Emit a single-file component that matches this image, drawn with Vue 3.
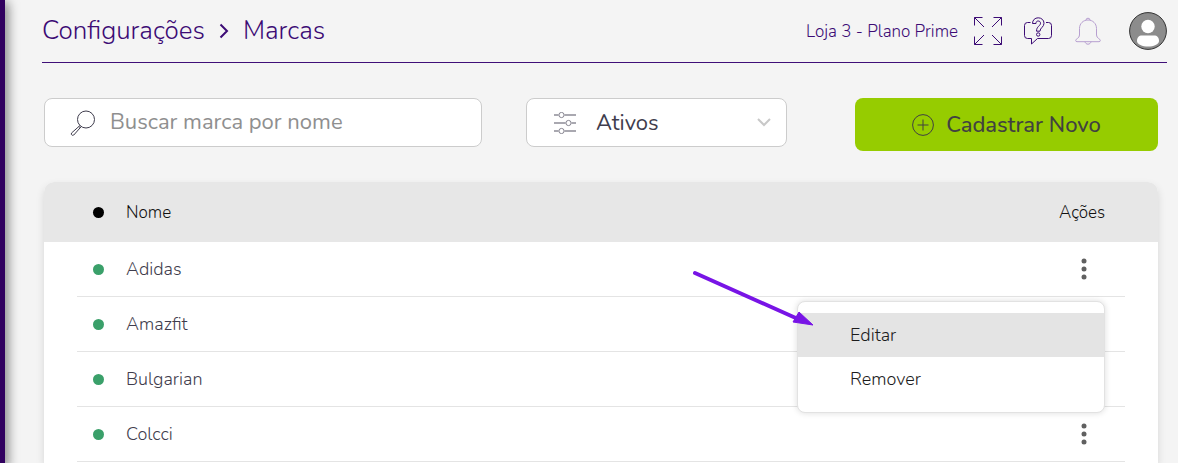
<script setup>
import { ref } from 'vue'

const search = ref('')
const status = ref('Ativos')
const openBrand = ref('Adidas')
const brands = ['Adidas', 'Amazfit', 'Bulgarian', 'Colcci']
const hidden = ['Amazfit', 'Bulgarian']

function toggle(name) {
  openBrand.value = openBrand.value === name ? '' : name
}
</script>

<template>
  <div class="page">
    <aside class="rail"></aside>
    <main class="main">
      <header class="header">
        <nav class="crumbs" aria-label="Trilha">
          <a href="#">Configurações</a>
          <svg width="10" height="16" viewBox="0 0 10 16"><path d="M1.500 1.500 8 8l-6.500 6.500" /></svg>
          <span>Marcas</span>
        </nav>
        <span class="store">Loja 3 - Plano Prime</span>
        <div class="tools">
          <button type="button" class="icon-btn" aria-label="Tela cheia">
            <svg width="28" height="28" viewBox="0 0 28 28">
              <path d="M.5 8.500v-8h8M.5.5l9.500 9.500M19.500.5h8v8M27.500.5 18 10M.5 19.500v8h8M.5 27.500 10 18M19.500 27.500h8v-8M27.500 27.500 18 18" />
            </svg>
          </button>
          <button type="button" class="icon-btn" aria-label="Ajuda">
            <svg width="28" height="28" viewBox="0 0 28 28">
              <path d="M6.500 5.500H3.500a3 3 0 0 0-3 3v10a3 3 0 0 0 3 3h4v5.500l6-5.500h11a3 3 0 0 0 3-3v-10a3 3 0 0 0-3-3h-2.500" />
              <path d="M8.500 6.500C8.500 3 11 .8 14.200.8s5.800 2.200 5.800 5.400c0 4-4 4.500-4 8h-3.500c0-5 4-5.200 4-8 0-1.400-1-2.200-2.300-2.200-1.400 0-2.200.8-2.200 2.500z" />
              <circle cx="14.200" cy="17.500" r="1.700" />
            </svg>
          </button>
          <button type="button" class="icon-btn bell" aria-label="Notificações">
            <svg width="28" height="28" viewBox="0 0 28 28">
              <path d="M12 3.200a2 2 0 1 1 4 0M5.500 18v-6.500c0-5 3.800-8.500 8.500-8.500s8.500 3.500 8.500 8.500V18c0 3.500 3.800 3.500 3.800 5.500 0 .8-.5 1.200-1.300 1.200H3c-.8 0-1.300-.4-1.300-1.200C1.700 21.500 5.500 21.500 5.500 18z" />
              <path d="M11 24.700c.3 1.500 1.500 2.500 3 2.500s2.700-1 3-2.500" />
            </svg>
          </button>
          <button type="button" class="icon-btn avatar" aria-label="Perfil">
            <svg width="38" height="38" viewBox="0 0 38 38">
              <circle class="disc" cx="19" cy="19" r="18.400" />
              <circle class="person" cx="19" cy="14.500" r="6.700" />
              <path class="person" d="M8 29c0-3.500 1.800-5.500 5-5.500h12c3.200 0 5 2 5 5.500 0 3.500-5.500 5.500-11 5.500S8 32.500 8 29z" />
            </svg>
          </button>
        </div>
      </header>

      <section class="content">
        <div class="toolbar">
          <label class="field search">
            <svg width="26" height="26" viewBox="0 0 26 26">
              <circle cx="16" cy="9.500" r="8.500" />
              <path d="M10 15.500 1.500 23l-.2 1.400 1 .9 1.500-.3 7.400-8.400M9 16.500l1.600 1.600" />
            </svg>
            <input v-model="search" type="text" placeholder="Buscar marca por nome" aria-label="Buscar marca por nome" />
          </label>
          <label class="field filter">
            <svg width="22" height="22" viewBox="0 0 22 22">
              <path class="bar" d="M0 3h4.500M10.500 3H22M0 11h11.500M17.500 11H22M0 19h4.500M10.500 19H22" />
              <circle cx="7.500" cy="3" r="2.600" />
              <circle cx="14.500" cy="11" r="2.600" />
              <circle cx="7.500" cy="19" r="2.600" />
            </svg>
            <select v-model="status" aria-label="Situação">
              <option>Ativos</option>
              <option>Inativos</option>
            </select>
            <svg class="chevron" width="14" height="9" viewBox="0 0 14 9"><path d="m1 1 6 6 6-6" /></svg>
          </label>
          <button type="button" class="primary">
            <svg width="22" height="22" viewBox="0 0 22 22">
              <circle cx="11" cy="11" r="10.400" />
              <path d="M11 5.500v11M5.500 11h11" />
            </svg>
            <span>Cadastrar Novo</span>
          </button>
        </div>

        <div class="card">
          <table>
            <thead>
              <tr>
                <th class="mark"><span class="dot"></span></th>
                <th class="name">Nome</th>
                <th class="actions">Ações</th>
              </tr>
            </thead>
            <tbody>
              <tr v-for="brand in brands" :key="brand">
                <td class="mark"><span class="dot"></span></td>
                <td class="name">{{ brand }}</td>
                <td class="actions">
                  <div class="anchor">
                    <button
                      v-if="!hidden.includes(brand)"
                      type="button"
                      class="kebab"
                      :aria-label="'Ações de ' + brand"
                      @click="toggle(brand)"
                    >
                      <svg width="6" height="22" viewBox="0 0 6 22">
                        <circle cx="3" cy="3" r="2.500" />
                        <circle cx="3" cy="11" r="2.500" />
                        <circle cx="3" cy="19" r="2.500" />
                      </svg>
                    </button>
                    <div v-if="openBrand === brand" class="menu">
                      <button type="button" class="item active">Editar</button>
                      <button type="button" class="item">Remover</button>
                      <svg class="pointer" width="122" height="58" viewBox="0 0 122 58">
                        <path class="shaft" d="M3 3 106 49" />
                        <path class="head" d="m107 42 14 13-20-3z" />
                      </svg>
                    </div>
                  </div>
                </td>
              </tr>
            </tbody>
          </table>
        </div>
      </section>
    </main>
  </div>
</template>

<style>
body {
  background: #f4f4f4;
}
</style>

<style scoped>
.page {
  display: flex;
  height: 100vh;
  overflow: hidden;
  font-family: Nunito, "Noto Sans", "Open Sans", sans-serif;
  font-weight: 300;
  color: #3f3d4d;
}
svg {
  display: block;
  flex: none;
  fill: none;
  stroke: currentColor;
}
button,
input,
select {
  margin: 0;
  padding: 0;
  border: 0;
  background: none;
  font: inherit;
  color: inherit;
  outline: none;
}
button {
  cursor: pointer;
}
.rail {
  flex: none;
  width: 5px;
  background: #31005f;
  box-shadow: 0 4px 12px 2px rgba(0, 0, 0, 0.6);
}
.main {
  flex: 1;
  min-width: 0;
  display: flex;
  flex-direction: column;
  padding: 0 11px 0 37px;
}
.header {
  display: flex;
  align-items: center;
  height: 62px;
  border-bottom: 1px solid #3f0f78;
  color: #3c0b75;
}
.crumbs {
  display: flex;
  align-items: center;
  gap: 14px;
  flex: 1;
  font-size: 26px;
  line-height: 34px;
}
.crumbs a {
  color: inherit;
  text-decoration: none;
}
.crumbs svg {
  stroke-width: 2;
}
.store {
  font-size: 17px;
  margin-right: 16px;
}
.tools {
  display: flex;
  align-items: center;
  gap: 22px;
}
.bell {
  color: #b79fd0;
}
.avatar {
  margin-left: 5px;
}
.disc {
  fill: #8c8c8c;
  stroke: #333;
}
.person {
  fill: #fff;
  stroke: none;
}
.content {
  flex: 1;
  display: flex;
  flex-direction: column;
  gap: 31px;
  padding: 35px 9px 0 2px;
}
.toolbar {
  display: grid;
  grid-template-columns: 438fr 261fr 327fr;
  align-items: start;
  gap: 44px;
  font-size: 22px;
  font-weight: 400;
}
.field {
  box-sizing: border-box;
  display: flex;
  align-items: center;
  min-width: 0;
  height: 49px;
  padding: 0 15px 0 27px;
  border: 1px solid #ccc;
  border-radius: 8px;
  background: #fff;
}
.field input,
.field select {
  flex: 1;
  min-width: 0;
  height: 30px;
  padding-bottom: 2px;
}
.search {
  gap: 14px;
  padding-left: 25px;
}
.search input::placeholder {
  color: #8f8f8f;
  opacity: 1;
}
.filter {
  gap: 20px;
}
.filter select {
  appearance: none;
}
.filter svg {
  color: #85838f;
}
.filter .bar {
  stroke-width: 2;
  stroke: #a9a8b0;
}
.filter .chevron {
  color: #c8c8c8;
  stroke-width: 2;
}
.primary {
  display: flex;
  align-items: center;
  justify-content: center;
  gap: 12px;
  height: 53px;
  margin-left: 24px;
  border-radius: 8px;
  background: #96cc00;
  color: #414141;
  font-weight: 500;
}
.card {
  flex: 1;
  padding: 0 33px;
  border-radius: 10px 10px 0 0;
  background: #fff;
  box-shadow: 0 4px 8px rgba(0, 0, 0, 0.12);
  overflow: hidden;
}
table {
  width: 100%;
  border-collapse: collapse;
  font-size: 18px;
}
thead {
  background: #e7e7e7;
  box-shadow: -33px 0 #e7e7e7, 33px 0 #e7e7e7;
  color: #111;
  font-size: 17px;
}
th {
  height: 60px;
  padding: 0;
  font-weight: 300;
  text-align: left;
}
td {
  height: 54px;
  padding: 0;
  border-bottom: 1px solid #e4e4e4;
}
.mark {
  width: 49px;
}
.dot {
  display: block;
  width: 11px;
  height: 11px;
  margin-left: 16px;
  border-radius: 50%;
  background: #3aa06a;
}
th .dot {
  background: #000;
}
.actions {
  width: 66px;
}
.anchor {
  position: relative;
}
.kebab {
  display: block;
  margin-left: 22px;
}
.kebab svg {
  fill: #606060;
  stroke: none;
}
.menu {
  position: absolute;
  z-index: 1;
  top: 43px;
  right: 20px;
  width: 306px;
  padding: 11px 0;
  border: 1px solid #e2e2e2;
  border-radius: 8px;
  background: #fff;
  box-shadow: 0 0 6px rgba(0, 0, 0, 0.14);
}
.item {
  display: block;
  width: 100%;
  height: 44px;
  padding-left: 52px;
  text-align: left;
  color: #1c1c1c;
}
.item.active {
  background: #e4e4e4;
}
.pointer {
  position: absolute;
  top: -32px;
  left: -106px;
  pointer-events: none;
}
.shaft {
  stroke: #7814e6;
  stroke-width: 4;
  stroke-linecap: round;
}
.head {
  fill: #7814e6;
  stroke: #7814e6;
}
</style>
